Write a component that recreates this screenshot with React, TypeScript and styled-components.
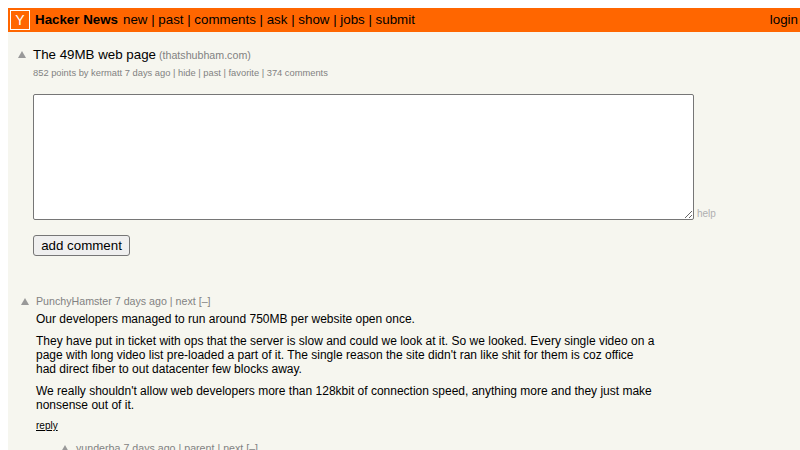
import React from "react";
import styled, { createGlobalStyle } from "styled-components";

const Global = createGlobalStyle`
  html, body { margin: 0; padding: 0; height: 450px; overflow: hidden; background: #fff; }
  body { padding: 8px 0 0 8px; box-sizing: border-box; font-family: "Liberation Sans", Arial, sans-serif; }
`;

const Page = styled.div`
  width: 792px;
  height: 442px;
  overflow: hidden;
  background: #f6f6ef;
`;

const Header = styled.header`
  height: 24px;
  background: #ff6600;
  display: flex;
  align-items: center;
  padding: 0 2px;
  font-size: 13.33px;
  color: #000;
`;

const Logo = styled.div`
  width: 18px;
  height: 18px;
  border: 1px solid #fff;
  color: #fff;
  font-size: 14px;
  line-height: 19px;
  text-align: center;
  margin-right: 5px;
`;

const NavText = styled.span`
  padding-bottom: 2px;
`;

const Brand = styled.b`
  margin-right: 5px;
  padding-bottom: 2px;
`;

const Spacer = styled.span`
  flex: 1;
`;

const Main = styled.main`
  padding: 15px 0 0 10px;
`;

const TitleRow = styled.div`
  display: flex;
  align-items: baseline;
  height: 15px;
  font-size: 13.33px;
  color: #000;
`;

const Arrow = styled.span<{ $gap: number }>`
  width: 0;
  height: 0;
  flex: none;
  border-left: 4px solid transparent;
  border-right: 4px solid transparent;
  border-bottom: 7px solid #999;
  margin-right: ${(p) => p.$gap}px;
  align-self: center;
`;

const Site = styled.span`
  font-size: 10.67px;
  color: #828282;
  margin-left: 3px;
`;

const Subtext = styled.div`
  font-size: 9.33px;
  line-height: 11px;
  color: #828282;
  margin: 6px 0 0 15px;
`;

const Form = styled.form`
  margin: 15px 0 0 15px;
`;

const FieldRow = styled.div`
  display: flex;
  align-items: flex-end;
`;

const Area = styled.textarea`
  width: 661px;
  height: 126px;
  box-sizing: border-box;
  display: block;
  background: #fff;
  border: 1px solid #767676;
  border-radius: 2px;
  padding: 2px;
  margin: 0;
`;

const Help = styled.span`
  font-size: 10px;
  line-height: 11px;
  color: #afafaf;
  margin: 0 0 1px 3px;
`;

const Submit = styled.button`
  display: block;
  margin-top: 15px;
  width: 97px;
  height: 21px;
  padding: 0;
  box-sizing: border-box;
  font: 13.33px "Liberation Sans", Arial, sans-serif;
  color: #000;
  background: #efefef;
  border: 1px solid #767676;
  border-radius: 3px;
`;

const Comment = styled.article<{ $indent: number; $top: number }>`
  display: flex;
  margin: ${(p) => p.$top}px 0 0 ${(p) => p.$indent}px;
`;

const Vote = styled.div`
  width: 15px;
  height: 12px;
  flex: none;
  display: flex;
  align-items: center;
`;

const Body = styled.div`
  width: 620px;
`;

const Head = styled.div`
  font-size: 10.67px;
  line-height: 12px;
  color: #828282;
`;

const Text = styled.p<{ $first?: boolean }>`
  margin: ${(p) => (p.$first ? 5 : 8)}px 0 0;
  font-size: 12px;
  line-height: 14px;
  color: #000;
`;

const Reply = styled.a`
  display: block;
  margin-top: 8px;
  font-size: 10px;
  line-height: 11px;
  color: #000;
  text-decoration: underline;
`;

export default function App() {
  return (
    <>
      <Global />
      <Page>
        <Header>
          <Logo>Y</Logo>
          <Brand>Hacker News</Brand>
          <NavText>new | past | comments | ask | show | jobs | submit</NavText>
          <Spacer />
          <NavText>login</NavText>
        </Header>
        <Main>
          <TitleRow>
            <Arrow $gap={7} />
            <span>The 49MB web page</span>
            <Site>(thatshubham.com)</Site>
          </TitleRow>
          <Subtext>852 points by kermatt 7 days ago | hide | past | favorite | 374 comments</Subtext>
          <Form>
            <FieldRow>
              <Area />
              <Help>help</Help>
            </FieldRow>
            <Submit type="button">add comment</Submit>
          </Form>
          <Comment $indent={3} $top={39}>
            <Vote>
              <Arrow $gap={0} />
            </Vote>
            <Body>
              <Head>PunchyHamster 7 days ago | next [–]</Head>
              <Text $first>Our developers managed to run around 750MB per website open once.</Text>
              <Text>
                They have put in ticket with ops that the server is slow and could we look at it. So we looked. Every single video on a page with long video list pre-loaded a part of it. The single reason the site didn't ran like shit for them is coz office had direct fiber to out datacenter few blocks away.
              </Text>
              <Text>
                We really shouldn't allow web developers more than 128kbit of connection speed, anything more and they just make nonsense out of it.
              </Text>
              <Reply>reply</Reply>
            </Body>
          </Comment>
          <Comment $indent={43} $top={11}>
            <Vote>
              <Arrow $gap={0} />
            </Vote>
            <Body>
              <Head>yunderba 7 days ago | parent | next [–]</Head>
            </Body>
          </Comment>
        </Main>
      </Page>
    </>
  );
}
